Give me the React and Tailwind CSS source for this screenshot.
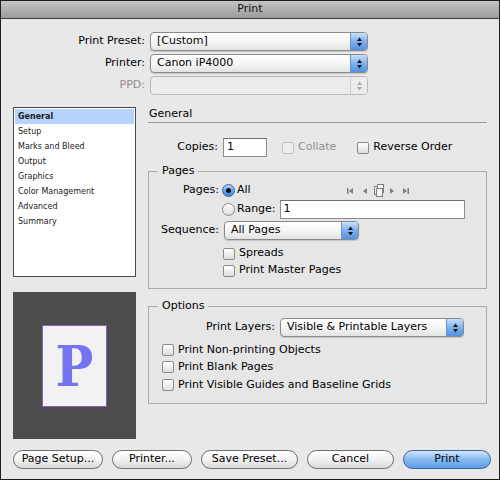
import React from 'react';

const sans = "[font-family:'DejaVu_Sans',sans-serif]";

function Arrows({ disabled }) {
  const c = disabled ? '#a8a8a8' : '#111';
  return (
    <svg width="7" height="12" viewBox="0 0 7 12">
      <path d="M3.5 1.5 L6 5 L1 5 Z" fill={c} />
      <path d="M3.5 10.5 L6 7 L1 7 Z" fill={c} />
    </svg>
  );
}

function Popup({ value, width, disabled }) {
  return (
    <div
      className={`flex h-[19px] shrink-0 overflow-hidden rounded-[4px] border ${
        disabled ? 'border-[#b9b9b9] bg-[#ececec]' : 'border-[#8a8a8a] bg-gradient-to-b from-white via-[#f6f6f6] to-[#e2e2e2] shadow-[0_1px_1px_rgba(0,0,0,0.15)]'
      }`}
      style={{ width }}
    >
      <div className="flex flex-1 items-center pl-[6px] text-[11px] text-black">{value}</div>
      <div
        className={`flex w-[17px] items-center justify-center border-l ${
          disabled ? 'border-[#cfcfcf] bg-[#ececec]' : 'border-[#6d93c4] bg-gradient-to-b from-[#c9e0fa] via-[#7db1ee] to-[#4f92e0]'
        }`}
      >
        <Arrows disabled={disabled} />
      </div>
    </div>
  );
}

function Checkbox({ label, disabled }) {
  return (
    <div className="flex items-center gap-[4px]">
      <div
        className={`h-[12px] w-[12px] shrink-0 rounded-[2px] border ${
          disabled ? 'border-[#c2c2c2] bg-[#ededed]' : 'border-[#8a8a8a] bg-gradient-to-b from-white to-[#dedede]'
        }`}
      />
      <span className={`text-[11px] ${disabled ? 'text-[#8e8e8e]' : 'text-black'}`}>{label}</span>
    </div>
  );
}

function Radio({ checked }) {
  if (checked) {
    return (
      <div className="flex h-[13px] w-[13px] shrink-0 items-center justify-center rounded-full border border-[#35649f] bg-gradient-to-b from-[#b6d6fa] via-[#6aa6ea] to-[#3e86d8]">
        <div className="h-[5px] w-[5px] rounded-full bg-[#111]" />
      </div>
    );
  }
  return <div className="h-[13px] w-[13px] shrink-0 rounded-full border border-[#8a8a8a] bg-gradient-to-b from-white to-[#dcdcdc]" />;
}

function Button({ children, width, primary }) {
  return (
    <div
      className={`flex h-[19px] shrink-0 items-center justify-center rounded-full border text-[11px] text-black ${
        primary
          ? 'border-[#35649f] bg-gradient-to-b from-[#d2e6fc] via-[#86b9f0] to-[#5d9de4]'
          : 'border-[#6f6f6f] bg-gradient-to-b from-white via-[#f2f2f2] to-[#d9d9d9]'
      }`}
      style={{ width }}
    >
      {children}
    </div>
  );
}

function PageNav() {
  const g = '#7f7f7f';
  return (
    <svg width="68" height="13" viewBox="0 0 68 13">
      {/* first */}
      <rect x="2" y="4" width="1.5" height="6" fill={g} />
      <path d="M8 4 L4 7 L8 10 Z" fill={g} />
      {/* prev */}
      <path d="M22 4 L18 7 L22 10 Z" fill={g} />
      {/* pages */}
      <rect x="29.5" y="2.5" width="6" height="8" fill="#f4f4f4" stroke={g} />
      <rect x="32.5" y="0.5" width="6" height="8" fill="#f4f4f4" stroke={g} />
      <rect x="31.5" y="4.5" width="6" height="8" fill="#f4f4f4" stroke={g} />
      {/* next */}
      <path d="M45 4 L49 7 L45 10 Z" fill={g} />
      {/* last */}
      <path d="M58 4 L62 7 L58 10 Z" fill={g} />
      <rect x="62.5" y="4" width="1.5" height="6" fill={g} />
    </svg>
  );
}

const panels = ['General', 'Setup', 'Marks and Bleed', 'Output', 'Graphics', 'Color Management', 'Advanced', 'Summary'];

export default function App() {
  return (
    <div className={`flex h-[480px] w-[500px] flex-col overflow-hidden border border-[#1e1e1e] bg-[#e8e8e8] ${sans}`}>
      {/* Title bar */}
      <div className="flex h-[18px] shrink-0 items-center justify-center border-b border-[#3c3c3c] bg-gradient-to-b from-[#c4c4c4] to-[#9c9c9c] text-[11px] text-[#111]">
        Print
      </div>

      <div className="flex flex-col px-[12px]">
        {/* Preset / printer / PPD */}
        <div className="mt-[13px] flex flex-col gap-[3px]">
          <div className="flex items-center gap-[5px]">
            <div className="w-[132px] text-right text-[11px]">Print Preset:</div>
            <Popup value="[Custom]" width={218} />
          </div>
          <div className="flex items-center gap-[5px]">
            <div className="w-[132px] text-right text-[11px]">Printer:</div>
            <Popup value="Canon iP4000" width={218} />
          </div>
          <div className="flex items-center gap-[5px]">
            <div className="w-[132px] text-right text-[11px] text-[#8e8e8e]">PPD:</div>
            <Popup value="" width={218} disabled />
          </div>
        </div>

        {/* Main */}
        <div className="mt-[12px] flex gap-[12px]">
          {/* Left column */}
          <div className="flex w-[123px] shrink-0 flex-col">
            <div className="h-[170px] border border-[#4a4a4a] bg-white p-px">
              {panels.map((p, i) => (
                <div
                  key={p}
                  className={`flex h-[15px] items-center pl-[3px] text-[8px] text-[#1a1a1a] ${sans} ${
                    i === 0 ? 'bg-[#b6d4fb] font-bold' : 'font-normal'
                  }`}
                >
                  {p}
                </div>
              ))}
            </div>
            <div className="mt-[15px] flex h-[147px] items-center justify-center bg-[#4d4d4d]">
              <div className="flex h-[82px] w-[65px] items-center justify-center border border-[#8b5fb8] bg-[#f2f2f2]">
                <span className="[font-family:'DejaVu_Serif_Condensed','DejaVu_Serif',serif] text-[56px] font-bold leading-none text-[#7474f2]">P</span>
              </div>
            </div>
          </div>

          {/* Right column */}
          <div className="flex w-[340px] flex-col">
            <div className="border-b border-[#9a9a9a] pb-px pl-px text-[11px] leading-[14px]">General</div>

            <div className="mt-[15px] flex h-[19px] items-center">
              <div className="w-[70px] text-right text-[11px]">Copies:</div>
              <div className="ml-[5px] flex h-[19px] w-[44px] items-center border border-[#8c8c8c] border-t-[#6e6e6e] bg-white pl-[3px] text-[11px]">1</div>
              <div className="ml-[15px]">
                <Checkbox label="Collate" disabled />
              </div>
              <div className="ml-[21px]">
                <Checkbox label="Reverse Order" />
              </div>
            </div>

            {/* Pages */}
            <fieldset className="mt-[7px] border border-[#a9a9a9] bg-[#e6e6e6] pb-[9px]">
              <legend className="ml-[9px] px-[4px] text-[11px] leading-[14px]">Pages</legend>
              <div className="mt-[3px] flex h-[19px] items-center">
                <div className="w-[70px] text-right text-[11px]">Pages:</div>
                <div className="ml-[3px] flex w-[123px] items-center gap-[2px]">
                  <Radio checked />
                  <span className="text-[11px]">All</span>
                </div>
                <PageNav />
              </div>
              <div className="flex h-[19px] items-center">
                <div className="w-[70px]" />
                <div className="ml-[3px] flex items-center gap-[2px]">
                  <Radio />
                  <span className="text-[11px]">Range:</span>
                </div>
                <div className="ml-[4px] flex h-[19px] w-[185px] items-center border border-[#8c8c8c] border-t-[#6e6e6e] bg-white pl-[3px] text-[11px]">1</div>
              </div>
              <div className="mt-[2px] flex h-[19px] items-center">
                <div className="w-[70px] text-right text-[11px]">Sequence:</div>
                <div className="ml-[5px]">
                  <Popup value="All Pages" width={135} />
                </div>
              </div>
              <div className="mt-[5px] flex h-[17px] items-center pl-[74px]">
                <Checkbox label="Spreads" />
              </div>
              <div className="flex h-[17px] items-center pl-[74px]">
                <Checkbox label="Print Master Pages" />
              </div>
            </fieldset>

            {/* Options */}
            <fieldset className="mt-[10px] border border-[#a9a9a9] bg-[#e6e6e6] pb-[9px]">
              <legend className="ml-[9px] px-[4px] text-[11px] leading-[14px]">Options</legend>
              <div className="mt-[5px] flex h-[19px] items-center">
                <div className="w-[126px] text-right text-[11px]">Print Layers:</div>
                <div className="ml-[5px]">
                  <Popup value="Visible & Printable Layers" width={184} />
                </div>
              </div>
              <div className="mt-[4px] flex flex-col pl-[13px]">
                <div className="flex h-[17.5px] items-center">
                  <Checkbox label="Print Non-printing Objects" />
                </div>
                <div className="flex h-[17.5px] items-center">
                  <Checkbox label="Print Blank Pages" />
                </div>
                <div className="flex h-[17.5px] items-center">
                  <Checkbox label="Print Visible Guides and Baseline Grids" />
                </div>
              </div>
            </fieldset>
          </div>
        </div>

        {/* Buttons */}
        <div className="mt-[11px] flex gap-[9px]">
          <Button width={90}>Page Setup...</Button>
          <Button width={80}>Printer...</Button>
          <Button width={97}>Save Preset...</Button>
          <Button width={87}>Cancel</Button>
          <Button width={88} primary>
            Print
          </Button>
        </div>
      </div>
    </div>
  );
}
